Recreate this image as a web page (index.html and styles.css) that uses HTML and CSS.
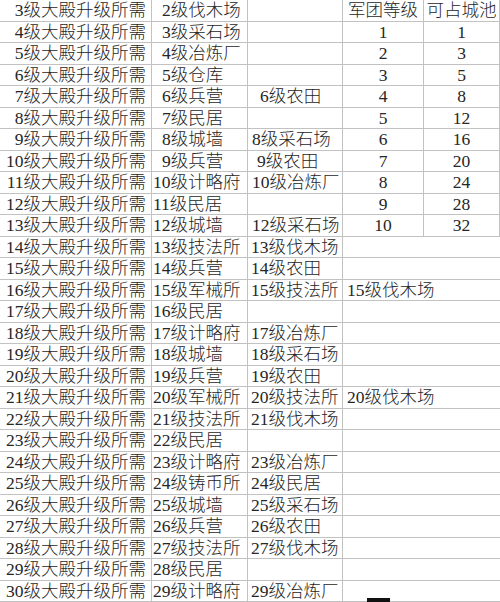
FILE: index.html
```html
<!DOCTYPE html>
<html lang="zh-CN">
<head>
<meta charset="utf-8">
<title>大殿升级所需</title>
<link rel="stylesheet" href="styles.css">
</head>
<body>
<div class="sheet">
  <div class="c c1">3级大殿升级所需</div><div class="c c2 one">2级伐木场</div><div class="c c3"></div><div class="c c4 ctr">军团等级</div><div class="c c5 ctr">可占城池</div>
  <div class="c c1">4级大殿升级所需</div><div class="c c2 one">3级采石场</div><div class="c c3"></div><div class="c c4 ctr">1</div><div class="c c5 ctr">1</div>
  <div class="c c1">5级大殿升级所需</div><div class="c c2 one">4级冶炼厂</div><div class="c c3"></div><div class="c c4 ctr">2</div><div class="c c5 ctr">3</div>
  <div class="c c1">6级大殿升级所需</div><div class="c c2 one">5级仓库</div><div class="c c3"></div><div class="c c4 ctr">3</div><div class="c c5 ctr">5</div>
  <div class="c c1">7级大殿升级所需</div><div class="c c2 one">6级兵营</div><div class="c c3 in-l">6级农田</div><div class="c c4 ctr">4</div><div class="c c5 ctr">8</div>
  <div class="c c1">8级大殿升级所需</div><div class="c c2 one">7级民居</div><div class="c c3"></div><div class="c c4 ctr">5</div><div class="c c5 ctr">12</div>
  <div class="c c1">9级大殿升级所需</div><div class="c c2 one">8级城墙</div><div class="c c3 in-s">8级采石场</div><div class="c c4 ctr">6</div><div class="c c5 ctr">16</div>
  <div class="c c1">10级大殿升级所需</div><div class="c c2 one">9级兵营</div><div class="c c3 in-m">9级农田</div><div class="c c4 ctr">7</div><div class="c c5 ctr">20</div>
  <div class="c c1">11级大殿升级所需</div><div class="c c2">10级计略府</div><div class="c c3 in-s">10级冶炼厂</div><div class="c c4 ctr">8</div><div class="c c5 ctr">24</div>
  <div class="c c1">12级大殿升级所需</div><div class="c c2">11级民居</div><div class="c c3"></div><div class="c c4 ctr">9</div><div class="c c5 ctr">28</div>
  <div class="c c1">13级大殿升级所需</div><div class="c c2">12级城墙</div><div class="c c3 in-s">12级采石场</div><div class="c c4 ctr">10</div><div class="c c5 ctr">32</div>
  <div class="c c1">14级大殿升级所需</div><div class="c c2">13级技法所</div><div class="c c3">13级伐木场</div><div class="c c45"></div>
  <div class="c c1">15级大殿升级所需</div><div class="c c2">14级兵营</div><div class="c c3">14级农田</div><div class="c c45"></div>
  <div class="c c1">16级大殿升级所需</div><div class="c c2">15级军械所</div><div class="c c3">15级技法所</div><div class="c c45">15级伐木场</div>
  <div class="c c1">17级大殿升级所需</div><div class="c c2">16级民居</div><div class="c c3"></div><div class="c c45"></div>
  <div class="c c1">18级大殿升级所需</div><div class="c c2">17级计略府</div><div class="c c3">17级冶炼厂</div><div class="c c45"></div>
  <div class="c c1">19级大殿升级所需</div><div class="c c2">18级城墙</div><div class="c c3">18级采石场</div><div class="c c45"></div>
  <div class="c c1">20级大殿升级所需</div><div class="c c2">19级兵营</div><div class="c c3">19级农田</div><div class="c c45"></div>
  <div class="c c1">21级大殿升级所需</div><div class="c c2">20级军械所</div><div class="c c3">20级技法所</div><div class="c c45">20级伐木场</div>
  <div class="c c1">22级大殿升级所需</div><div class="c c2">21级技法所</div><div class="c c3">21级伐木场</div><div class="c c45"></div>
  <div class="c c1">23级大殿升级所需</div><div class="c c2">22级民居</div><div class="c c3"></div><div class="c c45"></div>
  <div class="c c1">24级大殿升级所需</div><div class="c c2">23级计略府</div><div class="c c3">23级冶炼厂</div><div class="c c45"></div>
  <div class="c c1">25级大殿升级所需</div><div class="c c2">24级铸币所</div><div class="c c3">24级民居</div><div class="c c45"></div>
  <div class="c c1">26级大殿升级所需</div><div class="c c2">25级城墙</div><div class="c c3">25级采石场</div><div class="c c45"></div>
  <div class="c c1">27级大殿升级所需</div><div class="c c2">26级兵营</div><div class="c c3">26级农田</div><div class="c c45"></div>
  <div class="c c1">28级大殿升级所需</div><div class="c c2">27级技法所</div><div class="c c3">27级伐木场</div><div class="c c45"></div>
  <div class="c c1">29级大殿升级所需</div><div class="c c2">28级民居</div><div class="c c3"></div><div class="c c45"></div>
  <div class="c c1">30级大殿升级所需</div><div class="c c2">29级计略府</div><div class="c c3">29级冶炼厂</div><div class="c c45"></div>
  <div class="mark"></div>
</div>
</body>
</html>
```

FILE: styles.css
```css
html, body {
  margin: 0;
  padding: 0;
  background: #ffffff;
}

.sheet {
  position: relative;
  width: 500px;
  height: 602px;
  overflow: hidden;
  display: grid;
  grid-template-columns: 152px 96px 95px 81px 76px;
  grid-auto-rows: 21.5px;
  font-family: "Liberation Serif", "Noto Sans CJK SC", serif;
  font-size: 17.5px;
  font-weight: 300;
  color: #262626;
}

.c {
  box-sizing: border-box;
  border-right: 1px solid #c2c2c2;
  border-bottom: 1px solid #c2c2c2;
  line-height: 20px;
  white-space: nowrap;
  overflow: visible;
  padding-left: 1px;
}

.c1 {
  text-align: right;
  padding-right: 5px;
}

.c2.one {
  padding-left: 10px;
}

.c3 {
  padding-left: 3px;
}

.c3.in-l {
  padding-left: 12px;
}

.c3.in-m {
  padding-left: 9px;
}

.c3.in-s {
  padding-left: 4px;
}

.ctr {
  text-align: center;
  padding-left: 0;
}

.c45 {
  grid-column: span 2;
  border-right: none;
  padding-left: 4px;
}

.mark {
  position: absolute;
  left: 367px;
  top: 598px;
  width: 23px;
  height: 4px;
  background: #111111;
}
```
